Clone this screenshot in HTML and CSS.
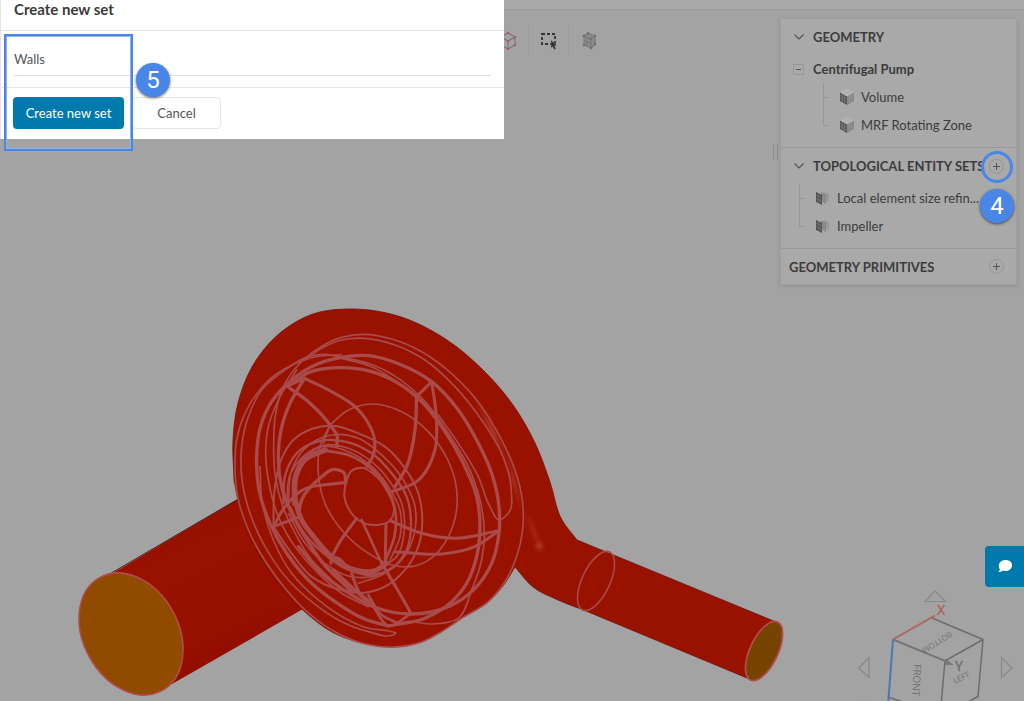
FILE: index.html
```html
<!DOCTYPE html>
<html lang="en">
<head>
<meta charset="utf-8">
<title>Create new set</title>
<link rel="stylesheet" href="styles.css">
</head>
<body>
<svg class="defs" width="0" height="0" aria-hidden="true">
  <symbol id="chevron" viewBox="0 0 12 12"><path d="M1.500 3.500l4.500 4.500 4.500-4.500" fill="none" stroke="#555" stroke-width="1.200"/></symbol>
  <symbol id="solid" viewBox="0 0 16 18">
    <path d="M8 1l7 3.500-7 4-7-4z" fill="#b6b6b6"/><path d="M1 4.500l7 4V17l-7-4z" fill="#555"/><path d="M15 4.500l-7 4V17l7-4z" fill="#888"/>
    <path d="M1 7.300l7 4 7-4M1 10.200l7 4 7-4M3.300 6v8.200M5.600 7.200v8.200M10.400 7.200v8.200M12.700 6v8.200M4.500 3l7 3.500M11.500 3l-7 3.500" fill="none" stroke="#9a9a9a" stroke-width=".4"/>
  </symbol>
  <symbol id="faces" viewBox="0 0 16 16">
    <path d="M9 2l5 2v8l-5-2z" fill="#999"/><path d="M6 2l5 2.500V14l-5-3z" fill="#868686"/><path d="M1 2l6 3v10l-6-3z" fill="#4c4c4c"/>
    <path d="M1 5l6 3 4-1M1 8.500l6 3 4-1M3 3v10M5 4v10M9 3.500V13" fill="none" stroke="#999" stroke-width=".4"/>
  </symbol>
</svg>
<div class="app">
  <header class="topbar"></header>
  <main class="workspace">
    <svg class="scene" viewBox="0 0 1024 701" role="img" aria-label="Centrifugal pump model">
      <defs>
        <linearGradient id="pipeShade" x1="0" y1="0" x2=".5" y2="1"><stop offset="0" stop-color="#900b00"/><stop offset=".4" stop-color="#991200"/><stop offset=".75" stop-color="#981100"/><stop offset="1" stop-color="#900a00"/></linearGradient>
        <radialGradient id="glow"><stop offset="0" stop-color="#b8463a" stop-opacity=".8"/><stop offset="1" stop-color="#991200" stop-opacity="0"/></radialGradient>
      </defs>
      <path d="M108 576L245 495L310 605L172 684Z" fill="url(#pipeShade)"/>
      <path d="M108 575L240 498" stroke="#4b1813" fill="none"/>
      <ellipse cx="131" cy="634" rx="64.500" ry="47.500" transform="rotate(61 131 634)" fill="#914b00" stroke="#b04c4c" stroke-width="1.600"/>
      <path id="body" fill="#991200" stroke="#711009" stroke-width=".8"/>
      <ellipse cx="492" cy="430" rx="6" ry="46" transform="rotate(-27 492 430)" fill="url(#glow)"/>
      <ellipse cx="514" cy="482" rx="5" ry="40" transform="rotate(-14 514 482)" fill="url(#glow)" opacity=".7"/>
      <ellipse cx="534" cy="532" rx="7" ry="30" transform="rotate(-24 534 532)" fill="url(#glow)" opacity=".5"/>
      <circle cx="539" cy="546" r="8" fill="url(#glow)"/>
      <ellipse cx="596" cy="581" rx="32" ry="14" transform="rotate(-65 596 581)" fill="none" stroke="#a94a4a" stroke-width="1.600"/>
      <ellipse cx="764" cy="651" rx="32" ry="14" transform="rotate(-65 764 651)" fill="#774400" stroke="#b04c4c" stroke-width="1.800"/>
      <g id="wires" transform="translate(225 300) scale(.3333)" fill="none" stroke="#a94b4b" stroke-linecap="round" stroke-linejoin="round"></g>
    </svg>

    <div class="toolbar">
      <button class="tool" aria-label="Wireframe view"><svg width="18" height="20" viewBox="0 0 18 20"><path d="M8 2l7 4v8l-7 4-7-4V6zM1 6l7 4 7-4M8 10v8" fill="none" stroke="#777" stroke-width="1.200"/><path d="M8 2v.1M15 6v.1M15 14v.1M8 18v.1M1 14v.1M1 6v.1M8 10v.1" stroke="#b25b50" stroke-width="2.500" stroke-linecap="round"/></svg></button>
      <button class="tool" aria-label="Box selection"><svg width="18" height="18" viewBox="0 0 18 18"><path d="M2 2h13v10H2z" fill="none" stroke="#333" stroke-width="1.800" stroke-dasharray="3 2"/><path d="M11 8l6 5.500-2.500.3 1.500 3-1.800.9-1.500-3-1.700 1.600z" fill="#2e2e2e" stroke="#a3a3a3" stroke-width=".4"/></svg></button>
      <button class="tool" aria-label="Mesh selection"><svg width="18" height="20" viewBox="0 0 18 20"><path d="M4 4l5-2 6 3v9l-3 3-8-3z" fill="#8c8c8c"/><path d="M4 5l7 3 4-3M4 5v9l7 3V8M4 9l7 4M7 6.500v9M4 5l4-3 7 3v9l-4 3" fill="none" stroke="#777"/><path d="M4 5v.1M8 2.500v.1M15 5v.1M11 8v.1M4 14v.1M11 17v.1M15 13v.1" stroke="#727272" stroke-width="2.800" stroke-linecap="round"/></svg></button>
    </div>

    <div class="splitter"></div>
    <aside class="panel">
      <section class="group">
        <h2 class="heading"><svg class="chevron"><use href="#chevron"/></svg><span class="label">GEOMETRY</span></h2>
        <div class="root"><button class="toggle" aria-label="Collapse Centrifugal Pump"></button><strong>Centrifugal Pump</strong></div>
        <ul class="tree nested">
          <li class="item"><svg class="solid"><use href="#solid"/></svg>Volume</li>
          <li class="item"><svg class="solid"><use href="#solid"/></svg>MRF Rotating Zone</li>
        </ul>
      </section>
      <section class="group">
        <h2 class="heading"><svg class="chevron"><use href="#chevron"/></svg><span class="label">TOPOLOGICAL ENTITY SETS</span><button class="add" aria-label="Add entity set"></button></h2>
        <ul class="tree">
          <li class="item"><svg class="faces"><use href="#faces"/></svg>Local element size refin...</li>
          <li class="item"><svg class="faces"><use href="#faces"/></svg>Impeller</li>
        </ul>
      </section>
      <section class="group last">
        <h2 class="heading"><span class="label">GEOMETRY PRIMITIVES</span><button class="add" aria-label="Add primitive"></button></h2>
      </section>
    </aside>

    <svg class="navcube" width="174" height="116" viewBox="850 585 174 116" role="img" aria-label="View orientation">
      <g fill="none" stroke="#888" stroke-width="1.200"><path d="M935 591l10.500 10.500h-20.500zM869 657.500v20l-10.500-9.500zM1001.500 657.500v20l10.500-9.500z"/></g>
      <g fill="none" stroke="#6f6b6b" stroke-width="1.500"><path d="M932 618l51 21.500-5 57-36 20M893 639.500l52 21.500 38-21.500M945 661l-4 44M888 697l18 6"/></g>
      <path d="M893 639.500l42-24" stroke="#a96761" stroke-width="2" fill="none"/>
      <path d="M893 639.500l-5 66" stroke="#4d76b4" stroke-width="2" fill="none"/>
      <path d="M893 639.500l56 23" stroke="#747773" stroke-width="1.800" fill="none"/><path d="M945 659l9 6-9 0z" fill="#747773"/>
      <path d="M860 703a5 5 0 0 1 8 0" stroke="#888" fill="none"/>
      <text x="937" y="615" class="axis x">X</text><text x="955" y="671" class="axis y">Y</text>
      <text class="face small" transform="translate(950 631) rotate(148)">BOTTOM</text>
      <text class="face" transform="translate(914 664) rotate(93)">FRONT</text>
      <text class="face small" transform="translate(955 684) rotate(-27)">LEFT</text>
    </svg>
    <button class="chat" aria-label="Open chat"><svg width="16" height="14" viewBox="0 0 16 14"><path d="M8.500 0c3.900 0 6.500 2.200 6.500 5.200S12.500 11 8.500 11c-1 0-1.900-.2-2.700-.5C4.700 11.500 3.200 12 1.500 12c.8-.9 1.300-1.700 1.400-2.700C2 8.300 1.800 7 1.800 5.500 1.800 2.500 4.600 0 8.500 0z" fill="#fff"/></svg></button>
    <div class="ring"></div>
    <div class="badge four">4</div>
  </main>
</div>

<form class="dialog" onsubmit="return false">
  <h1 class="title">Create new set</h1>
  <div class="field"><input class="name" value="Walls" aria-label="Set name"></div>
  <div class="actions"><button class="primary">Create new set</button><button class="secondary" type="button">Cancel</button></div>
</form>
<div class="marker"></div>
<div class="badge five">5</div>
<script src="scene.js"></script>
</body>
</html>
```
FILE: styles.css
```css
* { box-sizing: border-box; }
body { margin: 0; font: 14px/20px Lato, "Liberation Sans", sans-serif; color: #3c3c3c; background: #a3a3a3; overflow: hidden; }
button, input { font: inherit; color: inherit; margin: 0; padding: 0; border: 0; background: none; }
.defs { position: absolute; }
.app { display: flex; flex-direction: column; min-height: 100vh; }
.topbar { height: 10px; background: #a9a9a9; border-bottom: 1px solid #989898; }
.workspace { flex: 1; display: flex; align-items: flex-start; padding-right: 7px; }
.scene { position: absolute; left: 0; top: 0; width: 100%; height: 100%; }
.toolbar { position: relative; flex: 1; display: flex; padding: 16px 0 0 489px; }
.tool { width: 40px; height: 30px; display: grid; place-items: center; border-right: 1px solid #9b9b9b; }
.tool:last-child { border-right: 0; }
.splitter { position: relative; width: 5px; height: 16px; margin: 134px 2px 0 0; border: solid #8e8e8e; border-width: 0 1px; }

.panel { position: relative; width: 237px; margin-top: 8px; background: #a9a9a9; border: 1px solid #a0a0a0; box-shadow: 0 1px 4px rgba(0, 0, 0, .12); font-size: 13px; }
.group { padding-bottom: 8px; border-bottom: 1px solid #999; }
.group.last { padding-bottom: 0; border-bottom: 0; }
.heading { display: flex; align-items: center; height: 36px; margin: 0; padding: 0 12px 0 8px; font-size: 13px; font-weight: 700; white-space: nowrap; }
.last .heading { height: 35px; }
.label { flex: 1; min-width: 0; overflow: hidden; }
.chevron { width: 12px; height: 12px; margin: 0 8px 0 4px; flex: none; }
.root { display: flex; align-items: center; gap: 9px; height: 28px; padding-left: 12px; }
.toggle { width: 11px; height: 11px; border: 1px solid #979797; display: grid; place-items: center; }
.toggle::before { content: ""; width: 5px; height: 1px; background: #555; }
.tree { list-style: none; margin: 0 0 0 18px; padding: 0; }
.tree.nested { margin-left: 42px; }
.item { position: relative; display: flex; align-items: center; height: 28px; padding-left: 16px; white-space: nowrap; }
.item::before { content: ""; position: absolute; left: 0; top: 0; width: 5px; height: 14px; border: solid #989898; border-width: 0 0 1px 1px; }
.item:last-child::before { top: -14px; height: 28px; }
.solid { width: 16px; height: 18px; margin-right: 6px; }
.faces { width: 16px; height: 16px; margin-right: 6px; }
.add { flex: none; width: 15px; height: 15px; border: 1px solid #959595; border-radius: 50%; background: linear-gradient(#555, #555) center / 7px 1px no-repeat, linear-gradient(#555, #555) center / 1px 7px no-repeat; }

.navcube { position: absolute; right: 0; bottom: 0; }
.axis { font: 14px "Open Sans", sans-serif; }
.x { fill: #a96761; stroke: #a96761; stroke-width: .5; }
.y { fill: #707070; stroke: #707070; stroke-width: .5; }
.face { font: 10px "Open Sans", sans-serif; fill: #707070; }
.face.small { font-size: 8px; }
.chat { position: absolute; right: 0; top: 546px; width: 39px; height: 41px; border-radius: 4px 0 0 4px; background: #007aad; display: grid; place-items: center; }

.dialog { position: absolute; left: 0; top: 0; width: 504px; background: #fff; border-left: 1px solid #e3e3e3; color: #555; }
.title { height: 31px; margin: 0; padding: 0 13px; font-size: 15px; line-height: 18px; font-weight: 700; color: #3b3b3b; border-bottom: 1px solid #e6e6e6; }
.field { padding: 12px 13px 11px; border-bottom: 1px solid #e6e6e6; }
.name { display: block; width: 100%; height: 33px; border-bottom: 1px solid #e0e0e0; outline: 0; font-size: 13px; }
.actions { display: flex; gap: 8px; padding: 9px 12px 10px; font-size: 13px; }
.primary { width: 111px; height: 32px; border-radius: 4px; background: #007aad; color: #fff; }
.secondary { width: 89px; height: 32px; border: 1px solid #e4e4e4; border-radius: 4px; }

.marker { position: absolute; left: 4px; top: 34px; width: 129px; height: 117px; border: 2px solid #4a86e8; box-shadow: inset 0 0 0 1px #8bb4ef; }
.badge { position: absolute; width: 34px; height: 34px; border-radius: 50%; background: #4a86e8; color: #fff; font: 24px/34px Roboto, sans-serif; text-align: center; box-shadow: 0 1px 3px rgba(0, 0, 0, .6); }
.five { left: 136px; top: 63px; }
.four { right: 10px; top: 189px; }
.ring { position: absolute; right: 11px; top: 151px; width: 32px; height: 32px; border: 3px solid #4a86e8; border-radius: 50%; }
```
FILE: scene.js
```js
// Smooth curve through a flat list of x, y pairs. Handles scale with the
// length of their own segment, so uneven point spacing leaves no bumps.
function smooth(p, start = "M") {
  const n = p.length / 2;
  const at = i => { const k = Math.max(0, Math.min(n - 1, i)); return [p[2 * k], p[2 * k + 1]]; };
  const dist = (a, b) => Math.hypot(a[0] - b[0], a[1] - b[1]);
  const tangent = i => {
    const a = at(i - 1), b = at(i), c = at(i + 1);
    const u = dist(a, b), v = dist(b, c);
    if (!u || !v) { const l = u + v || 1; return [(c[0] - a[0]) / l, (c[1] - a[1]) / l]; }
    const w = v / (u + v);
    return [0, 1].map(k => w * (b[k] - a[k]) / u + (1 - w) * (c[k] - b[k]) / v);
  };
  let d = `${start}${p[0]} ${p[1]}`;
  for (let i = 0; i < n - 1; i++) {
    const b = at(i), c = at(i + 1), s = dist(b, c) / 3, t = tangent(i), r = tangent(i + 1);
    d += `C${b[0] + t[0] * s} ${b[1] + t[1] * s} ${c[0] - r[0] * s} ${c[1] - r[1] * s} ${c[0]} ${c[1]}`;
  }
  return d;
}

const upper = [234,480, 233,440, 238,403, 252,367, 280,333, 313,314, 353,309, 398,316, 447,340, 482,369, 513,405, 535,443, 550,482, 562,520, 577,540];
const neck = [586,611, 558,600, 533,587, 515,567];
const lower = [515,567, 503,586, 488,602, 463,617, 440,632, 421,642, 392,647, 358,642, 332,632, 305,612, 275,580, 250,537, 238,500, 234,480];
document.getElementById("body").setAttribute("d",
  smooth(upper) + "L776 622L747 678" + smooth(neck, "L") + smooth(lower, "L") + "Z");

// Feature edges: [stroke width, points]
const edges = [
  // casing
  [5, [350,165, 285,168, 225,185, 150,225, 100,275, 60,340, 35,420, 30,500, 38,590, 70,690, 125,790, 180,865, 240,930, 320,990, 400,1026, 500,1041, 590,1026, 650,995, 710,955, 790,905, 840,845, 875,770, 893,690, 892,600, 870,510, 830,420, 770,320, 690,230, 590,155, 500,117, 420,103, 350,112, 280,145, 220,195, 175,260, 152,340, 146,430, 150,520, 170,610, 205,690, 260,780, 320,840]],
  [5, [360,175, 300,163, 250,170, 180,210, 110,270, 70,350, 50,440, 50,530, 75,640, 120,740, 190,840, 260,905, 340,960, 430,995, 500,1006, 512,1000, 490,993, 430,985, 360,955, 280,900, 200,820, 145,720, 112,610, 105,500]],
  [5, [245,175, 290,145, 350,120, 420,115, 510,135, 600,180, 690,260, 770,360, 830,460, 858,560, 850,640, 822,660, 795,620, 760,530, 700,430, 640,345]],
  // front rings
  [10, [490,978, 420,958, 330,905, 250,840, 185,760, 135,670, 102,570, 95,470, 105,385, 140,305, 200,240, 270,195, 350,172, 430,167, 530,195, 620,245, 700,330, 760,430, 800,520, 822,620, 822,700, 800,790, 750,865, 670,920, 560,942, 450,922, 380,885, 290,820, 220,740]],
  [10, [190,258, 250,218, 340,203, 440,215, 520,250, 590,305, 650,380, 710,480, 755,590, 765,680, 755,770, 725,850, 680,905, 600,955, 490,978]],
  [5, [350,172, 430,190, 520,235, 600,305, 670,400, 730,500, 765,600, 778,690, 770,780, 740,870, 700,955, 620,972, 550,965, 490,978]],
  [5, [350,175, 440,200, 530,255, 580,290]],
  [10, [238,235, 195,310, 168,390, 160,480, 170,560, 200,640, 240,710, 290,785, 380,875]],
  [5, [215,210, 160,300, 130,380, 122,460, 132,550, 160,650, 210,740, 270,810, 350,880, 430,920]],
  [5, [315,375, 370,330, 440,312, 530,335, 600,385, 655,455, 690,540, 695,630, 670,710, 625,770, 560,800, 500,795, 430,760, 350,690, 300,610, 280,520, 285,440, 315,375]],
  // impeller hub
  [6, [145,690, 150,560, 170,475, 205,420, 260,387, 330,378, 400,400, 480,440, 540,505, 580,580, 592,660, 580,740, 540,810, 480,860, 420,878, 340,868, 260,830, 200,760, 145,680]],
  [7, [175,610, 182,520, 220,455, 290,422, 360,425, 440,460, 500,520, 545,590, 558,670, 545,750, 500,805, 430,825, 360,805, 290,755, 230,690, 195,620]],
  [5, [190,600, 200,510, 240,445, 320,405, 400,415, 470,465, 535,540, 570,620, 568,700, 530,780, 470,825, 400,850]],
  [5, [185,610, 195,525, 240,465, 300,435, 370,445, 440,485, 495,545, 530,610, 538,690, 515,770, 460,805]],
  [5, [205,560, 225,490, 290,440, 370,455, 435,495, 490,560, 525,630, 525,710, 495,780]],
  [17, [210,610, 212,530, 240,478, 300,450]],
  [8, [300,452, 370,465, 440,507, 490,570, 512,640, 508,710, 480,785]],
  [15, [210,600, 230,660, 270,715, 325,775, 390,810, 450,812, 485,790]],
  [5, [190,640, 240,730, 300,790, 370,828, 440,830, 500,805]],
  [6, [362,550, 358,590, 370,625, 400,660, 455,675, 495,662, 507,630, 490,580, 455,530, 410,503, 380,512, 362,550]],
  // blades
  [10, [238,235, 185,258]],
  [10, [185,258, 250,305, 315,375, 337,410, 335,438]],
  [9, [238,235, 320,275, 390,320, 430,370, 449,420, 445,465, 425,500]],
  [9, [620,245, 575,290]],
  [10, [575,290, 570,390, 545,500, 510,560]],
  [9, [620,245, 634,350, 630,450, 575,545, 500,575]],
  [9, [495,662, 590,700, 690,715, 822,692]],
  [9, [822,692, 750,740, 650,762, 510,755]],
  [9, [362,547, 225,575, 180,620, 145,680]],
  [9, [145,680, 225,650]],
  [10, [362,550, 358,520, 325,508, 285,535, 230,600, 220,640]],
  [9, [395,655, 345,725, 318,775]],
  [8, [410,660, 440,725, 470,790]],
  [9, [470,790, 515,865, 558,940]],
  [9, [483,670, 481,780]],
  [9, [380,820, 405,880, 435,905]],
  [8, [435,905, 495,978, 558,940]],
  [8, [430,885, 470,945, 520,970]],
  [9, [318,790, 320,773, 345,778, 360,795]],
  [10, [325,810, 400,880, 440,915]],
  [5, [315,375, 295,430]]
];
const wires = document.getElementById("wires");
for (const [width, points] of edges) {
  const path = document.createElementNS("http://www.w3.org/2000/svg", "path");
  path.setAttribute("d", smooth(points));
  path.setAttribute("stroke-width", width);
  wires.appendChild(path);
}
```
